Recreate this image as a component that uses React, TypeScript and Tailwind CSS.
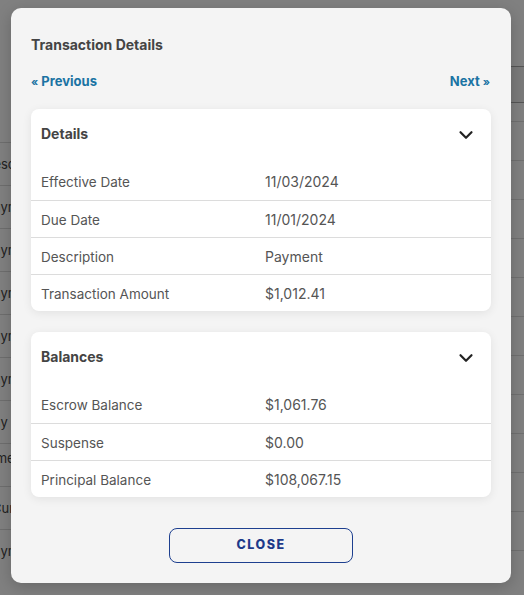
import { ChevronDown } from "lucide-react";

const font = { fontFamily: "Inter, 'Noto Sans', sans-serif" };

const details = [
  ["Effective Date", "11/03/2024"],
  ["Due Date", "11/01/2024"],
  ["Description", "Payment"],
  ["Transaction Amount", "$1,012.41"],
];

const balances = [
  ["Escrow Balance", "$1,061.76"],
  ["Suspense", "$0.00"],
  ["Principal Balance", "$108,067.15"],
];

// faint rows of the page behind the overlay
const bgRows = [
  { text: "Desc", shift: "-ml-[16px]" },
  { text: "Paym", shift: "-ml-[15px]" },
  { text: "Paym", shift: "-ml-[15px]" },
  { text: "Paym", shift: "-ml-[15px]" },
  { text: "Paym", shift: "-ml-[15px]" },
  { text: "Paym", shift: "-ml-[15px]" },
  { text: "Pay T", shift: "-ml-[15px]" },
  { text: "Payme\nItem", shift: "-ml-[27px]" },
  { text: "Cur", shift: "-ml-[8px]" },
  { text: "Paym", shift: "-ml-[15px]" },
];

function Section({ title, rows }: { title: string; rows: string[][] }) {
  return (
    <div className="rounded-[8px] bg-white shadow-[0_2px_10px_rgba(0,0,0,0.08)]">
      <div className="flex h-[54px] items-start justify-between px-[10px] pt-[16px]">
        <h3 className="text-[14px] font-bold leading-[18px] text-[#444]">{title}</h3>
        <ChevronDown size={22} strokeWidth={2.4} className="mr-[4px] mt-[-1px] text-[#222]" />
      </div>
      {rows.map(([label, value], i) => (
        <div
          key={label}
          className={`grid h-[37px] grid-cols-[224px_1fr] items-center px-[10px] pt-[1px] text-[13.5px] leading-[18px] text-[#555] ${
            i > 0 ? "border-t border-[#dcdcdc]" : ""
          }`}
        >
          <span>{label}</span>
          <span className="text-[14px]">{value}</span>
        </div>
      ))}
    </div>
  );
}

export default function App() {
  return (
    <div className="relative h-[595px] w-[524px] overflow-hidden bg-[#808080]" style={font}>
      {/* page behind */}
      <div className="flex h-full">
        <div className="w-[200px] pt-[142px]">
          {bgRows.map((r, i) => (
            <div
              key={i}
              className="flex h-[43px] items-center border-t border-[#6e6e6e] text-[13px] leading-[14px] text-[#222]"
            >
              <span className={`whitespace-pre ${r.shift}`}>{r.text}</span>
            </div>
          ))}
        </div>
        <div className="flex-1 pt-[66px]">
          <div className="h-[37px] border-y border-[#555] bg-[#7a7a7a]" />
          <div className="pt-[18px]">
            {Array.from({ length: 12 }).map((_, i) => (
              <div key={i} className="h-[39px] border-t border-[#707070]" />
            ))}
          </div>
        </div>
      </div>

      {/* modal */}
      <div className="absolute left-[11px] top-[8px] flex h-[575px] w-[500px] flex-col rounded-[10px] bg-[#f4f4f4] px-[20px] pt-[27px] shadow-[0_4px_16px_rgba(0,0,0,0.2)]">
        <h2 className="text-[14px] font-bold leading-[20px] text-[#444]">Transaction Details</h2>
        <div className="mt-[17px] flex h-[18px] items-center justify-between text-[13px] font-bold leading-[18px] text-[#1a73a3]">
          <span>
            <span className="text-[11px]">«</span> Previous
          </span>
          <span className="mr-[1px]">
            Next <span className="text-[11px]">»</span>
          </span>
        </div>
        <div className="mt-[19px] flex flex-col gap-[21px]">
          <Section title="Details" rows={details} />
          <Section title="Balances" rows={balances} />
        </div>
        <div className="mt-[31px] flex justify-center">
          <button className="h-[35px] w-[184px] rounded-[8px] border border-[#1d3f8f] text-[12.5px] font-extrabold tracking-[0.12em] text-[#1d3a8a]">
            CLOSE
          </button>
        </div>
      </div>
    </div>
  );
}
